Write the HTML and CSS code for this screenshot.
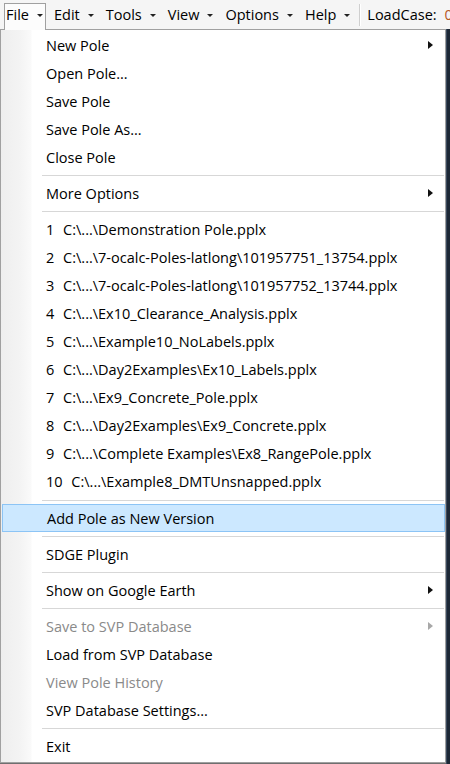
FILE: index.html
```html
<!DOCTYPE html>
<html>
<head>
<meta charset="utf-8">
<link rel="stylesheet" href="styles.css">
</head>
<body>
<div class="screen">
  <div class="menubar">
    <div class="mb-item mb-open"><span>File</span><span class="caret"></span></div>
    <div class="mb-item"><span>Edit</span><span class="caret"></span></div>
    <div class="mb-item"><span>Tools</span><span class="caret"></span></div>
    <div class="mb-item"><span>View</span><span class="caret"></span></div>
    <div class="mb-item"><span>Options</span><span class="caret"></span></div>
    <div class="mb-item"><span>Help</span><span class="caret"></span></div>
    <div class="mb-sep"></div>
    <div class="mb-label">LoadCase:</div>
    <div class="mb-combo">0</div>
  </div>
  <div class="body-row">
    <div class="menu">
      <div class="item"><span class="label">New Pole</span><span class="arrow"></span></div>
      <div class="item"><span class="label">Open Pole...</span></div>
      <div class="item"><span class="label">Save Pole</span></div>
      <div class="item"><span class="label">Save Pole As...</span></div>
      <div class="item"><span class="label">Close Pole</span></div>
      <div class="sep"></div>
      <div class="item"><span class="label">More Options</span><span class="arrow"></span></div>
      <div class="sep"></div>
      <div class="item"><span class="label"><span class="num">1</span> C:\...\Demonstration Pole.pplx</span></div>
      <div class="item"><span class="label"><span class="num">2</span> C:\...\7-ocalc-Poles-latlong\101957751_13754.pplx</span></div>
      <div class="item"><span class="label"><span class="num">3</span> C:\...\7-ocalc-Poles-latlong\101957752_13744.pplx</span></div>
      <div class="item"><span class="label"><span class="num">4</span> C:\...\Ex10_Clearance_Analysis.pplx</span></div>
      <div class="item"><span class="label"><span class="num">5</span> C:\...\Example10_NoLabels.pplx</span></div>
      <div class="item"><span class="label"><span class="num">6</span> C:\...\Day2Examples\Ex10_Labels.pplx</span></div>
      <div class="item"><span class="label"><span class="num">7</span> C:\...\Ex9_Concrete_Pole.pplx</span></div>
      <div class="item"><span class="label"><span class="num">8</span> C:\...\Day2Examples\Ex9_Concrete.pplx</span></div>
      <div class="item"><span class="label"><span class="num">9</span> C:\...\Complete Examples\Ex8_RangePole.pplx</span></div>
      <div class="item"><span class="label"><span class="num">10</span> C:\...\Example8_DMTUnsnapped.pplx</span></div>
      <div class="sep sep-wide"></div>
      <div class="item hover"><span class="label">Add Pole as New Version</span></div>
      <div class="sep"></div>
      <div class="item"><span class="label">SDGE Plugin</span></div>
      <div class="sep"></div>
      <div class="item"><span class="label">Show on Google Earth</span><span class="arrow"></span></div>
      <div class="sep"></div>
      <div class="item disabled"><span class="label">Save to SVP Database</span><span class="arrow"></span></div>
      <div class="item"><span class="label">Load from SVP Database</span></div>
      <div class="item disabled"><span class="label">View Pole History</span></div>
      <div class="item"><span class="label">SVP Database Settings...</span></div>
      <div class="sep"></div>
      <div class="item"><span class="label">Exit</span></div>
    </div>
    <div class="side"></div>
  </div>
</div>
</body>
</html>
```
FILE: styles.css
```css
html, body {
  margin: 0;
  padding: 0;
}
body {
  width: 450px;
  height: 764px;
  overflow: hidden;
  background: #6f6f6f;
  font-family: "Open Sans", "Noto Sans", sans-serif;
  font-size: 14.5px;
  color: #000;
}
.screen {
  width: 450px;
  height: 764px;
  overflow: hidden;
}
.menubar {
  height: 29px;
  background: #f5f5f5;
  display: flex;
  align-items: center;
  white-space: nowrap;
  position: relative;
  z-index: 2;
}
.mb-item {
  display: flex;
  align-items: center;
  height: 26px;
  padding: 0 3px;
  margin-right: 6px;
  box-sizing: border-box;
  flex: none;
}
.mb-open {
  margin-left: 4px;
  padding: 0 2px 5px 1px;
  margin-top: 3px;
  margin-right: 5px;
  align-self: flex-start;
  height: 27px;
  border: 1px solid #a0a0a0;
  border-bottom: none;
  background: #fcfcfc;
  margin-bottom: -1px;
}
.caret {
  display: inline-block;
  width: 0;
  height: 0;
  border-left: 3px solid transparent;
  border-right: 3px solid transparent;
  border-top: 3px solid #222;
  margin-left: 8px;
  margin-top: 2px;
}
.mb-sep {
  width: 1px;
  height: 22px;
  background: #cfcfcf;
  border-right: 1px solid #fff;
  margin: 0 6px 0 0;
  flex: none;
}
.mb-label {
  padding-right: 8px;
  flex: none;
}
.mb-combo {
  color: #b5581f;
  flex: none;
}
.body-row {
  display: flex;
  height: 735px;
}
.menu {
  width: 446px;
  height: 734px;
  box-sizing: border-box;
  border: 1px solid #a0a0a0;
  padding: 1px 0 1px 0;
  background: linear-gradient(to right, #eeeeee 0, #f4f4f4 20px, #fafafa 30px, #ffffff 31px);
  flex: none;
}
.side {
  flex: 1;
  background: #1d2836;
  border-left: 1px solid #3b4a5e;
}
.item {
  height: 28px;
  display: flex;
  align-items: center;
  padding: 0 12px 0 45px;
  box-sizing: border-box;
  white-space: nowrap;
}
.item .label {
  flex: 1;
}
.num {
  margin-right: 5px;
}
.arrow {
  width: 0;
  height: 0;
  border-top: 4px solid transparent;
  border-bottom: 4px solid transparent;
  border-left: 5px solid #111;
}
.disabled {
  color: #8a8a8a;
}
.disabled .arrow {
  border-left-color: #a8a8a8;
}
.hover {
  background: #cce8ff;
  border: 1px solid #8cc4f5;
  margin: 0 0 0 1px;
  padding-left: 44px;
}
.sep {
  height: 1px;
  background: #d7d7d7;
  margin: 4px 1px 3px 41px;
}
.sep-wide {
  margin-top: 5px;
}
```
